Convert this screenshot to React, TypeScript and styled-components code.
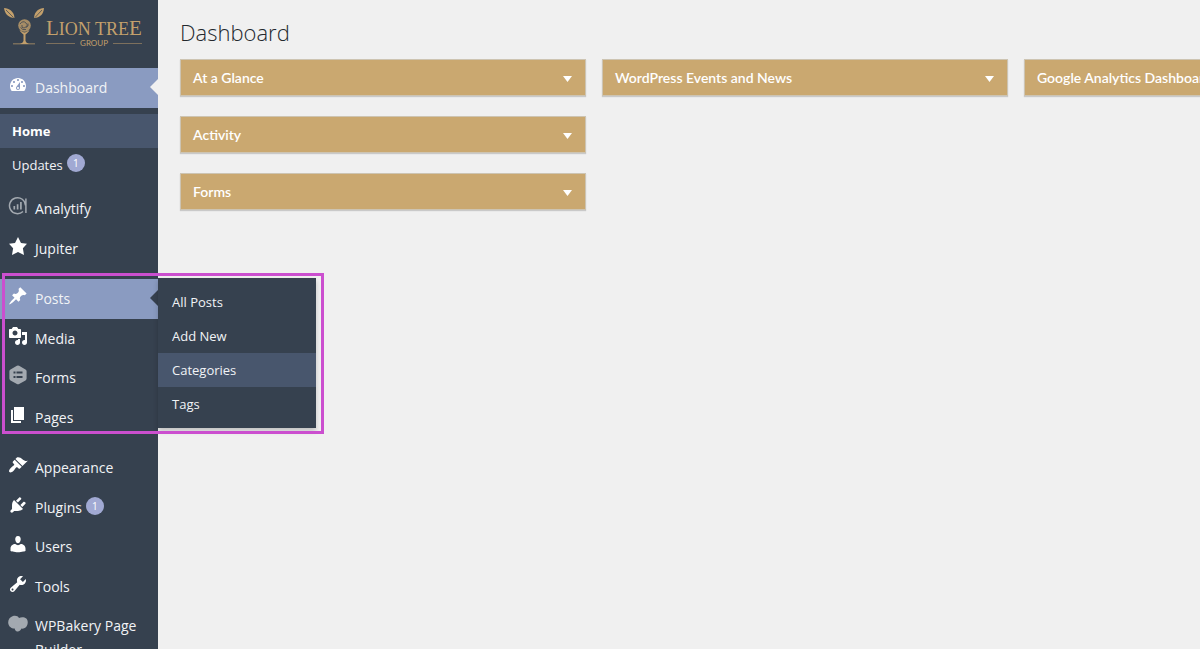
import React, { useState } from 'react';
import styled, { createGlobalStyle, css } from 'styled-components';

const color = {
  sidebar: '#36414f',
  current: '#8a9bc1',
  hover: '#48566d',
  page: '#f0f0f0',
  gold: '#caa870',
  logo: '#c3a06c',
  text: '#f1f3f6',
  badge: '#a1a9d3',
  heading: '#23282d',
  highlight: '#cb4fcf',
};

const GlobalStyle = createGlobalStyle`
  *, *::before, *::after { box-sizing: border-box; }
  body {
    margin: 0;
    background: ${color.page};
    font-family: 'Open Sans', 'Noto Sans', sans-serif;
    font-size: 14px;
  }
  ul { list-style: none; margin: 0; padding: 0; }
  a { color: inherit; text-decoration: none; }
`;

const Shell = styled.div`
  display: flex;
  height: 100vh;
  overflow: hidden;
`;

const Sidebar = styled.nav`
  position: relative;
  z-index: 1;
  flex: 0 0 158px;
  background: ${color.sidebar};
  color: ${color.text};
`;

const Brand = styled.a`
  display: flex;
  align-items: flex-start;
  gap: 2px;
  height: 68px;
  padding: 7px 0 0 3px;
  color: ${color.logo};
`;

const BrandText = styled.span`
  display: flex;
  flex-direction: column;
  align-items: stretch;
  width: 96px;
  padding-top: 11px;
  font-family: 'Liberation Serif', serif;
  font-size: 21px;
  line-height: 20px;
  white-space: nowrap;
`;

const SmallCaps = styled.small`
  font-size: 18px;
`;

const BrandSub = styled.span`
  display: flex;
  align-items: center;
  gap: 5px;
  font-family: Lato, sans-serif;
  font-size: 8px;
  line-height: 8px;

  &::before, &::after {
    content: '';
    flex: 1;
    height: 1px;
    background: ${color.logo};
    opacity: 0.5;
  }
`;

const MenuGroup = styled.ul`
  position: relative;

  & + & { margin-top: 11px; }
`;

const MenuLink = styled.a<{ $active?: boolean }>`
  position: relative;
  display: flex;
  align-items: flex-start;
  gap: 7px;
  padding: 8px;
  line-height: 24px;
  ${(p) => p.$active && css`background: ${color.current};`}
`;

const MenuItem = styled.li`
  position: relative;

  &:nth-child(even) > ${MenuLink} { padding-bottom: 7px; }
`;

const Icon = styled.svg<{ $muted?: boolean }>`
  flex: none;
  width: 20px;
  height: 20px;
  margin-top: -1px;
  fill: ${(p) => (p.$muted ? '#a3a9b0' : '#ffffff')};
`;

const Badge = styled.span`
  display: inline-block;
  width: 18px;
  height: 18px;
  margin-left: 4px;
  border-radius: 50%;
  background: ${color.badge};
  color: #fff;
  font-size: 10px;
  line-height: 18px;
  text-align: center;
  vertical-align: 3px;
`;

const Pointer = styled.span<{ $color: string }>`
  position: absolute;
  right: 0;
  top: 50%;
  margin-top: -9px;
  border: 8px solid transparent;
  border-left-width: 0;
  border-right-color: ${(p) => p.$color};
`;

const Submenu = styled.ul`
  padding: 6px 0 7px;
  font-size: 13px;
  line-height: 34px;
`;

const Flyout = styled(Submenu)`
  position: absolute;
  top: -1px;
  left: 100%;
  width: 158px;
  padding: 7px 0;
  background: ${color.sidebar};
  box-shadow: 0 3px 5px rgba(0, 0, 0, 0.2);
`;

const SubLink = styled.a<{ $active?: boolean; $bold?: boolean }>`
  display: block;
  height: 34px;
  padding: 0 12px;
  font-weight: ${(p) => (p.$bold ? 700 : 400)};
  color: ${(p) => (p.$bold ? '#fff' : 'inherit')};
  background: ${(p) => (p.$active ? color.hover : 'transparent')};
`;

const FlyoutLink = styled(SubLink)`
  padding: 0 14px;
`;

const Highlight = styled.li`
  position: absolute;
  top: -6px;
  left: 2px;
  width: 322px;
  height: 161px;
  border: 3px solid ${color.highlight};
  pointer-events: none;
`;

const Main = styled.main`
  flex: 1;
  min-width: 0;
  padding: 17px 0 0 22px;
`;

const Heading = styled.h1`
  margin: 0 0 12px;
  color: ${color.heading};
  font-size: 22px;
  font-weight: 350;
  line-height: 30px;
`;

const Columns = styled.div`
  display: grid;
  grid-template-columns: repeat(3, minmax(406px, 1fr));
  gap: 16px;
  align-items: start;
`;

const Column = styled.div`
  display: flex;
  flex-direction: column;
  gap: 20px;
`;

const Panel = styled.section`
  border: 1px solid #cdc4b2;
  background: ${color.gold};
  box-shadow: 0 1px 1px rgba(0, 0, 0, 0.16);
`;

const PanelTitle = styled.h2`
  margin: 0;
  font-size: 14px;
`;

const PanelToggle = styled.button`
  display: flex;
  align-items: center;
  justify-content: space-between;
  width: 100%;
  height: 35px;
  padding: 0 13px 0 12px;
  border: 0;
  background: none;
  color: #fff;
  font-family: Lato, sans-serif;
  font-size: 14px;
  font-weight: 600;
  text-align: left;
  cursor: pointer;
`;

const Caret = styled.svg`
  width: 9px;
  height: 6px;
  margin-top: 2px;
  fill: #fff;
`;

const PanelBody = styled.div`
  padding: 12px;
  background: #fff;
`;

const paths = {
  dashboard:
    'M3.76 16h12.48c1.1-1.37 1.76-3.11 1.76-5 0-4.42-3.58-8-8-8s-8 3.58-8 8c0 1.89.66 3.63 1.76 5zM10 4c.55 0 1 .45 1 1s-.45 1-1 1-1-.45-1-1 .45-1 1-1zM6 6c.55 0 1 .45 1 1s-.45 1-1 1-1-.45-1-1 .45-1 1-1zm8 0c.55 0 1 .45 1 1s-.45 1-1 1-1-.45-1-1 .45-1 1-1zm-5.37 5.55L12 7v6c0 1.1-.9 2-2 2s-2-.9-2-2c0-.57.24-1.08.63-1.45zM4 10c.55 0 1 .45 1 1s-.45 1-1 1-1-.45-1-1 .45-1 1-1zm12 0c.55 0 1 .45 1 1s-.45 1-1 1-1-.45-1-1 .45-1 1-1zm-5 3c0-.55-.45-1-1-1s-1 .45-1 1 .45 1 1 1 1-.45 1-1z',
  star: 'M10 1l3 6 6 .75-4.12 4.62L16 19l-6-3-6 3 1.13-6.63L1 7.75 7 7z',
  pin: 'M10.44 3.02l1.82-1.82 6.36 6.35-1.83 1.82c-1.05-.68-2.48-.57-3.41.36l-.75.75c-.92.93-1.04 2.35-.35 3.41l-1.83 1.82-2.41-2.41-2.8 2.79c-.42.42-3.38 2.71-3.8 2.29s1.86-3.39 2.28-3.81l2.79-2.79L4.1 9.36l1.83-1.82c1.05.69 2.48.57 3.4-.36l.75-.75c.93-.92 1.05-2.35.36-3.41z',
  media:
    'M13 11V4c0-.55-.45-1-1-1h-1.67L9 1H5L3.67 3H2c-.55 0-1 .45-1 1v7c0 .55.45 1 1 1h10c.55 0 1-.45 1-1zM7 4.5c1.38 0 2.5 1.12 2.5 2.5S8.38 9.5 7 9.5 4.5 8.38 4.5 7 5.62 4.5 7 4.5zM14 6h5v10.5c0 1.38-1.12 2.5-2.5 2.5S14 17.88 14 16.5s1.12-2.5 2.5-2.5c.17 0 .34.02.5.05V9h-3V6zm-4 8.05V13h2v3.5c0 1.38-1.12 2.5-2.5 2.5S7 17.88 7 16.5 8.12 14 9.5 14c.17 0 .34.02.5.05z',
  pages: 'M6 15V2h10v13H6zm-1 1h8v2H3V5h2v11z',
  appearance:
    'M14.48 11.06L7.41 3.99l1.5-1.5c.5-.56 2.3-.47 3.51.32 1.21.8 1.43 1.28 2.91 2.1 1.18.64 2.45 1.26 4.45.85zm-.71.71L6.7 4.7 4.93 6.47c-.39.39-.39 1.02 0 1.41l1.06 1.06c.39.39.39 1.03 0 1.42-.6.6-1.43 1.11-2.21 1.69-.35.26-.7.53-1.01.84C1.43 14.23.4 16.08 1.4 17.07c.99 1 2.84-.03 4.18-1.36.31-.31.58-.66.85-1.02.57-.78 1.08-1.61 1.69-2.21.39-.39 1.02-.39 1.41 0l1.06 1.06c.39.39 1.02.39 1.41 0z',
  plugins:
    'M13.11 4.36L9.87 7.6 8 5.73l3.24-3.24c.35-.34 1.05-.2 1.56.32.52.51.66 1.21.31 1.55zm-8 1.77l.91-1.12 9.01 9.01-1.19.84c-.71.71-2.63 1.16-3.82 1.16H6.14L4.9 17.26c-.59.59-1.54.59-2.12 0-.59-.58-.59-1.53 0-2.12l1.24-1.24v-3.88c0-1.13.4-3.19 1.09-3.89zm7.26 3.97l3.24-3.24c.34-.35 1.04-.21 1.55.31.52.51.66 1.21.31 1.55l-3.24 3.25z',
  users:
    'M10 9.250c-2.270 0-2.730-3.440-2.730-3.440C7 4.020 7.820 2 9.970 2c2.160 0 2.980 2.020 2.710 3.810 0 0-.41 3.440-2.680 3.440zM7.300 10C8.700 11.500 11.300 11.500 12.700 10c2.400.1 4.800 1.700 4.800 4.500v2.500s-3.700 1.200-7.500 1.200S2.500 17 2.500 17v-2.500C2.500 11.700 4.900 10.100 7.300 10z',
  tools:
    'M16.68 9.77c-1.34 1.34-3.3 1.67-4.95.99l-5.41 6.52c-.99.99-2.59.99-3.58 0s-.99-2.59 0-3.57l6.52-5.42c-.68-1.65-.35-3.61.99-4.95 1.28-1.28 3.12-1.62 4.72-1.06l-2.89 2.89 2.82 2.82 2.86-2.87c.53 1.58.18 3.39-1.08 4.65zM3.81 16.21c.4.39 1.04.39 1.43 0 .4-.4.4-1.04 0-1.43-.39-.4-1.03-.4-1.43 0-.39.39-.39 1.03 0 1.43z',
  forms:
    'M8.9.8q1.100-.6 2.200 0l6.400 3.600q1.100.7 1.100 1.900v7.200q0 1.200-1.100 1.900l-6.400 3.600q-1.100.6-2.200 0l-6.400-3.600q-1.100-.7-1.100-1.900V6.300q0-1.200 1.100-1.900zM5.500 6.500v2h2v-2zM8.500 6.500v2h6v-2zM5.500 11v2h2v-2zM8.500 11v2h6v-2z',
  bakery:
    'M5 3C7.500 2.100 10 3 11 4.900C13 3.900 16.500 3.800 18.300 5.600C20.200 7.500 20.100 11 18.800 13C17.600 14.900 15.600 15.800 13.500 15.600C12.900 17.400 11 18.800 9 18.400C7.500 18.100 6.800 16.900 6.700 15.500C3.500 15.700.8 13.600.3 10.500C-.3 7 1.800 3.900 5 3z',
};

type IconName = keyof typeof paths | 'analytify';

function MenuIcon({ name }: { name: IconName }) {
  if (name === 'analytify') {
    return (
      <Icon viewBox="0 0 20 20" aria-hidden="true" $muted>
        <g fill="none" stroke="#a3a9b0">
          <path strokeWidth="1.5" d="M15 15.500A8 8 0 1 1 17.500 9.500M17.900 2.500V17" />
          <path strokeWidth="1.7" d="M6.300 13.500V10M9.600 13.500V8.300M12.900 13.500V6" />
        </g>
      </Icon>
    );
  }
  return (
    <Icon viewBox="0 0 20 20" aria-hidden="true" $muted={name === 'forms' || name === 'bakery'}>
      <path fillRule="evenodd" d={paths[name]} />
    </Icon>
  );
}

interface EntryProps {
  icon: IconName;
  label: string;
  count?: number;
  active?: boolean;
  pointer?: string;
  children?: React.ReactNode;
}

function Entry({ icon, label, count, active, pointer, children }: EntryProps) {
  return (
    <MenuItem>
      <MenuLink href="#" $active={active}>
        <MenuIcon name={icon} />
        <span>
          {label}
          {count !== undefined && <Badge>{count}</Badge>}
        </span>
        {pointer && <Pointer $color={pointer} />}
      </MenuLink>
      {children}
    </MenuItem>
  );
}

function TreeMark() {
  return (
    <svg width="41" height="40" viewBox="0 0 41 40" fill={color.logo} aria-hidden="true">
      <path d="M1 1C6 1.500 11 4 11.500 11C5.500 10.500 2 7.500 1 1Z" />
      <path d="M41 1C36 1.500 31.500 4 31 11C37 10.500 40.500 7.500 41 1Z" />
      <path d="M3 3L10.500 10.500M39 3L32 10.500" stroke={color.sidebar} strokeWidth="0.7" />
      <circle cx="21.500" cy="18.500" r="6.300" opacity="0.8" />
      <path
        d="M17 17q3-4 6-1t-2 5q-3 0-2-3M23 20.500q3-1 2-4M17.500 20.500q2 3 5.500 2"
        fill="none"
        stroke={color.sidebar}
        strokeWidth="0.9"
        opacity="0.8"
      />
      <path d="M16.500 23.500Q18.500 26 20.500 27.500V34Q20 36 17 37H26Q23 36 22.500 34V27.500Q24.500 26 26.500 23.500L25.500 23.500Q23.500 25.500 21.500 25.500Q19.500 25.500 17.500 23.500Z" />
      <path d="M10 36.400H32V37.300H10Z" opacity="0.8" />
    </svg>
  );
}

function Widget({ title }: { title: string }) {
  const [open, setOpen] = useState(false);
  return (
    <Panel>
      <PanelTitle>
        <PanelToggle type="button" aria-expanded={open} onClick={() => setOpen(!open)}>
          {title}
          <Caret viewBox="0 0 9 6" aria-hidden="true">
            <path d="M0 0H9L4.500 6Z" />
          </Caret>
        </PanelToggle>
      </PanelTitle>
      {open && <PanelBody />}
    </Panel>
  );
}

const widgetColumns = [
  ['At a Glance', 'Activity', 'Forms'],
  ['WordPress Events and News'],
  ['Google Analytics Dashboard'],
];

const postLinks = ['All Posts', 'Add New', 'Categories', 'Tags'];

export default function App() {
  return (
    <>
      <GlobalStyle />
      <Shell>
        <Sidebar aria-label="Main menu">
          <Brand href="#">
            <TreeMark />
            <BrandText>
              <span>
                L<SmallCaps>ION TRE</SmallCaps>E
              </span>
              <BrandSub>GROUP</BrandSub>
            </BrandText>
          </Brand>

          <MenuGroup>
            <Entry icon="dashboard" label="Dashboard" active pointer={color.page} />
            <li>
              <Submenu>
                <li>
                  <SubLink href="#" $active $bold>Home</SubLink>
                </li>
                <li>
                  <SubLink href="#">
                    Updates<Badge>1</Badge>
                  </SubLink>
                </li>
              </Submenu>
            </li>
            <Entry icon="analytify" label="Analytify" />
            <Entry icon="star" label="Jupiter" />
          </MenuGroup>

          <MenuGroup>
            <Entry icon="pin" label="Posts" active pointer={color.sidebar}>
              <Flyout>
                {postLinks.map((label) => (
                  <li key={label}>
                    <FlyoutLink href="#" $active={label === 'Categories'}>{label}</FlyoutLink>
                  </li>
                ))}
              </Flyout>
            </Entry>
            <Entry icon="media" label="Media" />
            <Entry icon="forms" label="Forms" />
            <Entry icon="pages" label="Pages" />
            <Highlight aria-hidden="true" />
          </MenuGroup>

          <MenuGroup>
            <Entry icon="appearance" label="Appearance" />
            <Entry icon="plugins" label="Plugins" count={1} />
            <Entry icon="users" label="Users" />
            <Entry icon="tools" label="Tools" />
            <Entry icon="bakery" label="WPBakery Page Builder" />
          </MenuGroup>
        </Sidebar>

        <Main>
          <Heading>Dashboard</Heading>
          <Columns>
            {widgetColumns.map((titles) => (
              <Column key={titles[0]}>
                {titles.map((title) => (
                  <Widget key={title} title={title} />
                ))}
              </Column>
            ))}
          </Columns>
        </Main>
      </Shell>
    </>
  );
}
